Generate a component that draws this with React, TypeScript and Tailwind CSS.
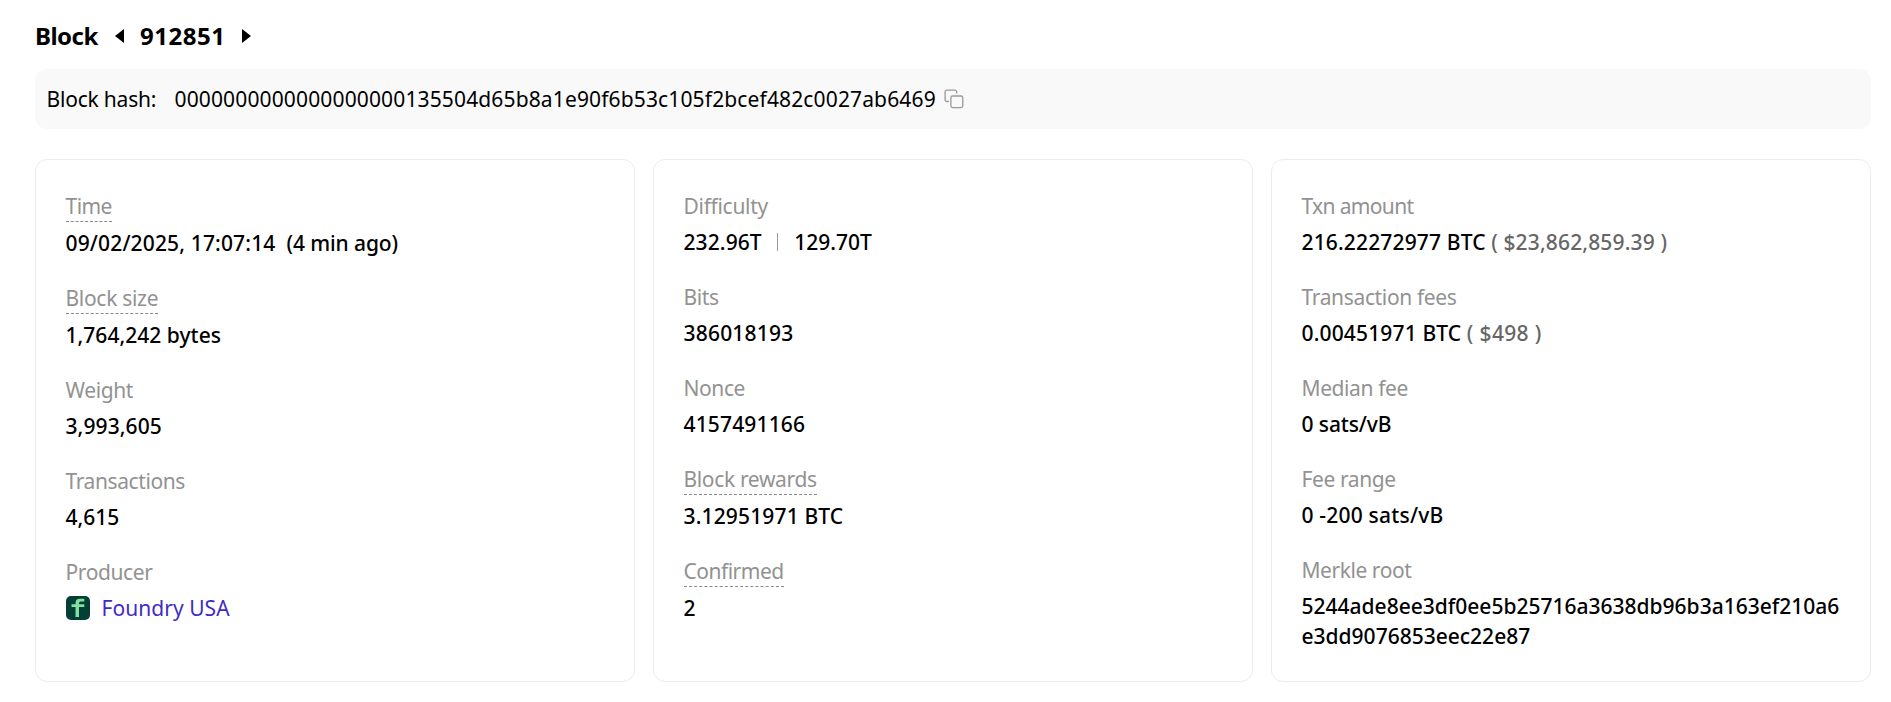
import type { ReactNode } from "react";

type FieldProps = {
  label: string;
  labelClass?: string;
  hint?: boolean;
  children: ReactNode;
};

function Field({ label, labelClass = "tracking-[-0.4px]", hint, children }: FieldProps) {
  return (
    <div className="flex flex-col items-start">
      <div
        className={`leading-[30px] text-[#929292] ${labelClass} ${hint ? "border-b border-dashed border-[#8a8a8a]" : ""}`}
      >
        {label}
      </div>
      <div className="mt-1.5 w-full font-[470] leading-[30px] text-black">{children}</div>
    </div>
  );
}

function Card({ children }: { children: ReactNode }) {
  return (
    <section className="flex h-[523px] flex-col gap-[25px] rounded-[12px] border border-[#ececec] pl-[29.5px] pr-[30px] pt-[31px]">
      {children}
    </section>
  );
}

function CopyIcon() {
  return (
    <svg className="ml-[8px] h-5 w-5" viewBox="0 0 20 20" fill="none" stroke="#999" strokeWidth="1.3">
      <rect x="6.9" y="7" width="11.9" height="11.6" rx="1.8" />
      <path d="M4.8 12.5H3A1.8 1.8 0 0 1 1.1 10.700V2.900A1.800 1.800 0 0 1 2.900 1.100H10.900A1.800 1.800 0 0 1 12.700 2.900V4.600" />
    </svg>
  );
}

function FoundryLogo() {
  return (
    <svg className="h-6 w-6" viewBox="0 0 24 24">
      <rect width="24" height="24" rx="5" fill="#043f36" />
      <path
        d="M5.500 8.300H9.500V7.200Q9.500 2.800 14 2.800H18.300V5.600H14.600Q13 5.600 13 7.400V8.300H18.300V11H13V21H9.500V11H5.500Z"
        fill="#84e0a0"
      />
    </svg>
  );
}

export default function App() {
  return (
    <main className="h-[702px] w-full overflow-hidden bg-white px-[35px] font-['Noto_Sans',sans-serif] text-[21px] text-black">
      <div className="w-[1836px]">
        <h1 className="flex h-[69px] items-center pt-[3px] text-[24px] font-bold leading-[36px]">
          <span className="w-[80px] tracking-[-0.5px]">Block</span>
          <svg className="h-[14px] w-[9px]" viewBox="0 0 9 14">
            <path d="M9 0V14L0 7Z" />
          </svg>
          <span className="ml-4 w-[102px] tracking-[0.5px]">912851</span>
          <svg className="h-[14px] w-[9px]" viewBox="0 0 9 14">
            <path d="M0 0V14L9 7Z" />
          </svg>
        </h1>
        <div className="flex h-[60px] items-center rounded-[12px] bg-[#f9f9f9] pl-[11.5px]">
          <span className="w-[128px] pt-[2px] font-[430] tracking-[-0.2px]">Block hash:</span>
          <span className="pt-[2px] font-[430] tracking-[0.14px]">
            0000000000000000000135504d65b8a1e90f6b53c105f2bcef482c0027ab6469
          </span>
          <CopyIcon />
        </div>
        <div className="mt-[30px] grid grid-cols-3 gap-[18px]">
          <Card>
            <Field label="Time" labelClass="tracking-[-0.55px]" hint>
              <span className="inline-block w-[221px] tracking-[0.15px]">09/02/2025, 17:07:14</span>
              <span className="tracking-[-0.1px]">(4 min ago)</span>
            </Field>
            <Field label="Block size" labelClass="tracking-[-0.3px]" hint>
              <span className="tracking-[0.03px]">1,764,242 bytes</span>
            </Field>
            <Field label="Weight">
              <span className="tracking-[0.1px]">3,993,605</span>
            </Field>
            <Field label="Transactions">4,615</Field>
            <Field label="Producer">
              <a className="flex items-center gap-3 font-normal text-[#3f2bc9]">
                <FoundryLogo />
                <span className="tracking-[0.05px]">Foundry USA</span>
              </a>
            </Field>
          </Card>
          <Card>
            <Field label="Difficulty" labelClass="tracking-[-0.3px]">
              <div className="flex items-center">
                <span className="tracking-[0.1px]">232.96T</span>
                <span className="ml-[15px] mr-[16.5px] h-[18px] w-px bg-[#999]" />
                <span>129.70T</span>
              </div>
            </Field>
            <Field label="Bits">
              <span className="tracking-[0.2px]">386018193</span>
            </Field>
            <Field label="Nonce">
              <span className="tracking-[0.15px]">4157491166</span>
            </Field>
            <Field label="Block rewards" labelClass="tracking-[-0.35px]" hint>
              <span className="tracking-[0.15px]">3.12951971 BTC</span>
            </Field>
            <Field label="Confirmed" labelClass="tracking-[-0.5px]" hint>
              2
            </Field>
          </Card>
          <Card>
            <Field label="Txn amount" labelClass="tracking-[-0.65px]">
              <span className="tracking-[0.15px]">216.22272977 BTC</span>{" "}
              <span className="tracking-[0.15px] text-[#666]">( $23,862,859.39 )</span>
            </Field>
            <Field label="Transaction fees" labelClass="tracking-[-0.35px]">
              <span className="tracking-[0.15px]">0.00451971 BTC</span>{" "}
              <span className="tracking-[0.35px] text-[#666]">( $498 )</span>
            </Field>
            <Field label="Median fee">
              <span className="tracking-[-0.1px]">0 sats/vB</span>
            </Field>
            <Field label="Fee range">
              <span className="tracking-[0.2px]">0 -200 sats/vB</span>
            </Field>
            <Field label="Merkle root" labelClass="tracking-[-0.45px]">
              <div className="break-all">5244ade8ee3df0ee5b25716a3638db96b3a163ef210a6e3dd9076853eec22e87</div>
            </Field>
          </Card>
        </div>
      </div>
    </main>
  );
}
